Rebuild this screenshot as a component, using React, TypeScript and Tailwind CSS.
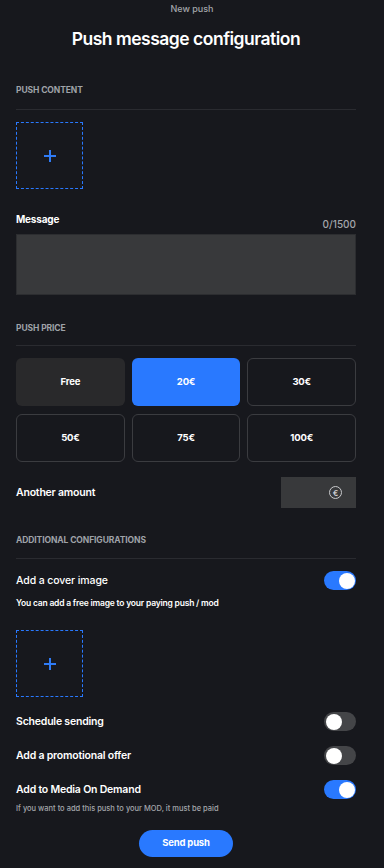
import React from "react";

function Plus() {
  return (
    <svg width="12" height="12" viewBox="0 0 12 12">
      <path d="M6 0v12M0 6h12" stroke="#2f7bf5" strokeWidth="2" />
    </svg>
  );
}

function DropBox({ className = "" }: { className?: string }) {
  return (
    <div className={"w-[67px] h-[67px] border border-dashed border-[#2979ff] flex items-center justify-center " + className}>
      <Plus />
    </div>
  );
}

function SectionHeader({ label, className = "", gap }: { label: string; className?: string; gap: string }) {
  return (
    <div className={className}>
      <div className="text-[8.5px] leading-[10px] font-bold text-[#9fa2a8] tracking-[-0.1px] uppercase">{label}</div>
      <div className={gap + " h-px bg-[#2a2b30]"} />
    </div>
  );
}

function Toggle({ on }: { on: boolean }) {
  return (
    <div
      className={
        "w-[32px] h-[19px] rounded-full flex items-center px-[1.5px] " +
        (on ? "bg-[#2979ff] justify-end" : "bg-[#444548] justify-start")
      }
    >
      <div className="w-[16px] h-[16px] rounded-full bg-white" />
    </div>
  );
}

export default function App() {
  const prices = ["Free", "20€", "30€", "50€", "75€", "100€"];
  return (
    <div
      className="min-h-[868px] w-[384px] bg-[#17181d] text-white"
      style={{ fontFamily: "Inter, 'Noto Sans', sans-serif" }}
    >
      <div className="pl-4 pr-[28px]">
        <div className="pt-[3px] text-center text-[9px] leading-[12px] font-medium text-[#a3a6ab] pl-[12px]">New push</div>
        <div className="mt-[12px] text-center text-[17.5px] leading-[24px] font-semibold tracking-[-0.5px]">
          Push message configuration
        </div>

        <SectionHeader label="Push content" className="mt-[34px]" gap="mt-[14px]" />
        <DropBox className="mt-[12px]" />

        <div className="mt-[23px] flex justify-between">
          <div className="text-[10px] leading-[14px] font-bold tracking-[-0.2px]">Message</div>
          <div className="mt-[5px] text-[10px] leading-[14px] text-[#a3a6ab] font-medium">0/1500</div>
        </div>
        <div className="mt-[3px] h-[61px] bg-[#38393b] border border-[#2c2d30]" />

        <SectionHeader label="Push price" className="mt-[28px]" gap="mt-[12px]" />

        <div className="mt-[12px] grid grid-cols-3 gap-x-[7px] gap-y-[8px]">
          {prices.map((p, i) => (
            <div
              key={p}
              className={
                "h-[48px] rounded-[6px] flex items-center justify-center text-[9.5px] font-bold tracking-[-0.2px] " +
                (i === 0
                  ? "bg-[#29292b]"
                  : i === 1
                  ? "bg-[#2979ff]"
                  : "border border-[#3b3c40]")
              }
            >
              {p}
            </div>
          ))}
        </div>

        <div className="mt-[15px] flex items-center justify-between">
          <div className="text-[10.5px] leading-[14px] font-semibold tracking-[-0.2px]">Another amount</div>
          <div className="w-[75px] h-[31px] bg-[#38393b] flex items-center justify-end pr-[14px]">
            <div className="w-[13px] h-[13px] rounded-full border border-[#c8c9cc] flex items-center justify-center text-[8px] leading-none font-bold text-[#c8c9cc]">
              €
            </div>
          </div>
        </div>

        <SectionHeader label="Additional configurations" className="mt-[27px]" gap="mt-[13px]" />

        <div className="mt-[12px] flex items-center justify-between">
          <div className="text-[10.5px] leading-[14px] font-medium tracking-[-0.1px]">Add a cover image</div>
          <Toggle on />
        </div>
        <div className="mt-[7px] text-[8.5px] leading-[12px] font-semibold tracking-[-0.2px]">
          You can add a free image to your paying push / mod
        </div>
        <DropBox className="mt-[21px]" />

        <div className="mt-[15px] flex items-center justify-between">
          <div className="text-[10.5px] leading-[14px] font-semibold tracking-[-0.2px]">Schedule sending</div>
          <Toggle on={false} />
        </div>
        <div className="mt-[15px] flex items-center justify-between">
          <div className="text-[10.5px] leading-[14px] font-semibold tracking-[-0.2px]">Add a promotional offer</div>
          <Toggle on={false} />
        </div>
        <div className="mt-[15px] flex items-center justify-between">
          <div className="text-[10.5px] leading-[14px] font-semibold tracking-[-0.2px]">Add to Media On Demand</div>
          <Toggle on />
        </div>
        <div className="mt-[4px] text-[7.5px] leading-[12px] font-medium text-[#a3a6ab]">
          If you want to add this push to your MOD, it must be paid
        </div>

        <div className="mt-[15px] flex justify-center">
          <div className="w-[94px] h-[27px] rounded-full bg-[#2979ff] flex items-center justify-center text-[9.5px] font-bold tracking-[-0.2px]">
            Send push
          </div>
        </div>
      </div>
    </div>
  );
}
